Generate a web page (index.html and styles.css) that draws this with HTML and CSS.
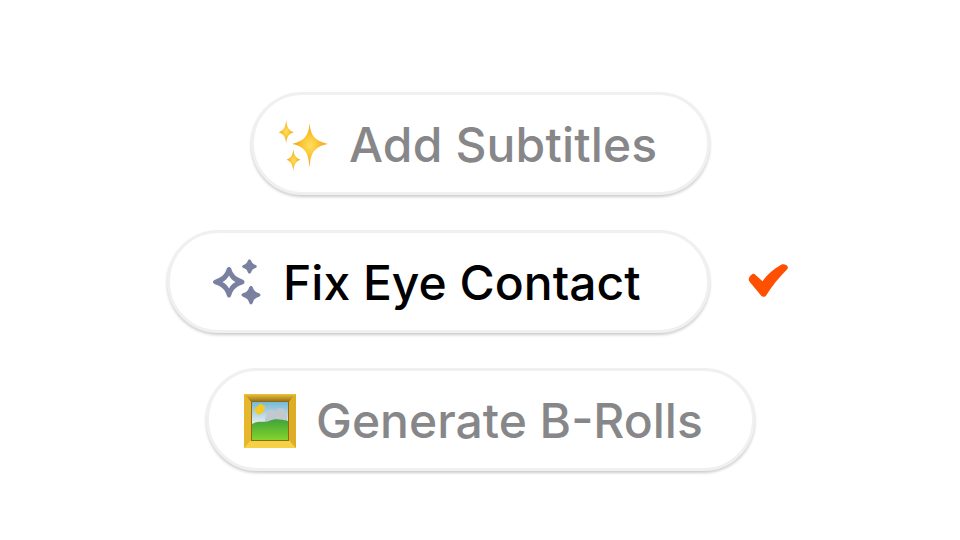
FILE: index.html
```html
<!DOCTYPE html>
<html lang="en">
<head>
<meta charset="utf-8">
<title>AI actions</title>
<link rel="stylesheet" href="styles.css">
</head>
<body>
<main class="list">
  <div class="row row-subtitles">
    <div class="pill pill-subtitles">
      <svg class="icon icon-sparkles" viewBox="0 0 52 50" aria-hidden="true">
        <defs>
          <radialGradient id="gold" cx="50%" cy="50%" r="50%">
            <stop offset="0" stop-color="#ffe05f"/>
            <stop offset=".5" stop-color="#fac22f"/>
            <stop offset="1" stop-color="#ee9c1b"/>
          </radialGradient>
        </defs>
        <path fill="url(#gold)" d="M32 3C33 14 35.500 20 50 23.500C35.500 26.500 33 33 32 47C31 33 28.500 26.500 15 23.500C28.500 20 31 14 32 3Z"/>
        <path fill="url(#gold)" d="M9 0C9.700 7 11 10 16.500 12C11 14 9.700 17 9 23C8.300 17 7 14 1.500 12C7 10 8.300 7 9 0Z"/>
        <path fill="url(#gold)" d="M16 29C16.600 34 18 37 23 39C18 41 16.600 44 16 50C15.400 44 14 41 9.500 39C14 37 15.400 34 16 29Z"/>
      </svg>
      <span class="label label-muted label-wide">Add Subtitles</span>
    </div>
  </div>

  <div class="row row-eye">
    <div class="pill pill-eye">
      <svg class="icon icon-stars" viewBox="0 0 50 50" aria-hidden="true">
        <path fill="#7a80a0" fill-rule="evenodd" d="M17 8C18 8 18.800 8.600 19.200 9.600C20.800 15 24 18.500 30.500 20.500C31.600 20.900 32.500 21.700 32.500 23C32.500 24.300 31.600 25.100 30.500 25.500C24 27.500 20.800 31 19.200 36.400C18.800 37.400 18 38.500 17 38.500C16 38.500 15.200 37.400 14.800 36.400C13.200 31 10 27.500 3.500 25.500C2.400 25.100 1 24.300 1 23C1 21.700 2.400 20.900 3.500 20.500C10 18.500 13.200 15 14.800 9.600C15.200 8.600 16 8 17 8ZM17 16.500C15.500 19.500 13.500 21.500 10.500 23C13.500 24.700 15.500 26.500 17 29.500C18.500 26.500 20.500 24.700 23.500 23C20.500 21.500 18.500 19.500 17 16.500Z"/>
        <path fill="#7a80a0" d="M37.500 .5C38.300 .5 38.900 1 39.200 1.800C39.900 4 41 5.100 43.500 6C44.200 6.300 44.800 6.800 44.800 7.500C44.800 8.200 44.200 8.700 43.500 9C41 9.900 39.900 11 39.200 13.200C38.900 14 38.300 14.500 37.500 14.500C36.700 14.500 36.100 14 35.800 13.200C35.100 11 34 9.900 31.500 9C30.800 8.700 30.200 8.200 30.200 7.500C30.200 6.800 30.800 6.300 31.500 6C34 5.100 35.100 4 35.800 1.800C36.100 1 36.700 .5 37.500 .5Z"/>
        <path fill="#7a80a0" d="M39 27C39.900 27 40.600 27.600 40.900 28.500C41.800 31.500 43.300 33 46.500 34.100C47.400 34.400 48.500 35 48.500 36C48.500 37 47.400 37.600 46.500 37.900C43.300 39 41.800 40.500 40.900 43.500C40.600 44.400 39.900 45.500 39 45.500C38.100 45.500 37.400 44.400 37.100 43.500C36.200 40.500 34.700 39 31.500 37.900C30.600 37.600 29.500 37 29.500 36C29.500 35 30.600 34.400 31.500 34.100C34.700 33 36.200 31.500 37.100 28.500C37.400 27.600 38.100 27 39 27Z"/>
      </svg>
      <span class="label">Fix Eye Contact</span>
    </div>
    <svg class="check" viewBox="0 0 40 33" aria-hidden="true">
      <path fill="#fe5000" d="M.8 14.500C1.500 12.500 3 10.800 4.800 9.800C5.500 9.500 6.200 9.700 6.800 10.200L14.500 17.300C19 11 25 5.500 33.500 .6C35 -.2 36.800 .2 38.500 1.200C40 2.200 40.300 4 39.200 5.300C31 13.500 24 22 18.300 31.200C17.200 32.900 15 33.300 13.400 32.100L1.400 17.500C.7 16.600 .5 15.500 .8 14.500Z"/>
    </svg>
  </div>

  <div class="row row-rolls">
    <div class="pill pill-rolls">
      <svg class="icon icon-frame" viewBox="0 0 52 54" aria-hidden="true">
        <defs>
          <linearGradient id="sky" x1="0" y1="0" x2="0" y2="1">
            <stop offset="0" stop-color="#74b9d6"/>
            <stop offset=".55" stop-color="#e4ecee"/>
          </linearGradient>
          <linearGradient id="grass" x1="0" y1="0" x2="0" y2="1">
            <stop offset="0" stop-color="#3fa33a"/>
            <stop offset="1" stop-color="#84d42c"/>
          </linearGradient>
          <linearGradient id="frameTop" x1="0" y1="0" x2="0" y2="1">
            <stop offset="0" stop-color="#f0c437"/>
            <stop offset="1" stop-color="#8f6a16"/>
          </linearGradient>
        </defs>
        <rect width="52" height="54" fill="#f2c93a"/>
        <path d="M0 0H52L45 8H7Z" fill="url(#frameTop)"/>
        <path d="M0 54H52L45 46H7Z" fill="#f6d045"/>
        <path d="M0 0L7 8V46L0 54Z" fill="#e6b62c"/>
        <path d="M52 0L45 8V46L52 54Z" fill="#dfac28"/>
        <rect x="7" y="7" width="38" height="40" fill="#8f6a16"/>
        <rect x="8" y="8" width="36" height="38" fill="url(#sky)"/>
        <path d="M21 25L24 17L28 15L31 18L35 14L40 15L43 21V28H21Z" fill="#c2c8d0"/>
        <path d="M10 16L16 9.500L21 12L20 18L14 21Z" fill="#f5c925"/>
        <path d="M8 30C15 26 19 29 25 27C31 24 37 25.500 44 27V46H8Z" fill="url(#grass)"/>
      </svg>
      <span class="label label-muted">Generate B-Rolls</span>
    </div>
  </div>
</main>
</body>
</html>
```
FILE: styles.css
```css
html, body {
  margin: 0;
  padding: 0;
  width: 960px;
  height: 540px;
  overflow: hidden;
  background: #ffffff;
}

.list {
  display: flex;
  flex-direction: column;
  gap: 35px;
  padding-top: 92px;
  font-family: Inter, "Liberation Sans", sans-serif;
}

.row {
  display: flex;
  align-items: center;
}

.row-subtitles { padding-left: 251px; }
.row-eye { padding-left: 167px; gap: 38px; }
.row-rolls { padding-left: 206px; }

.pill {
  box-sizing: border-box;
  height: 103px;
  display: flex;
  align-items: center;
  background: #ffffff;
  border: 3px solid #f0f0f0;
  border-radius: 52px;
  box-shadow: 0 2px 3px rgba(0, 0, 0, 0.2);
}

.pill-subtitles { width: 459px; padding-left: 23px; gap: 19px; }
.pill-eye { width: 543px; padding-left: 42px; gap: 21px; }
.pill-rolls { width: 549px; padding-left: 35px; gap: 20px; }

.label {
  font-size: 48px;
  font-weight: 500;
  line-height: 56px;
  padding-top: 2px;
  color: #000000;
  white-space: nowrap;
}

.label-muted { color: #87878a; }
.label-wide { letter-spacing: 0.15px; }

.icon { flex: none; display: block; }
.icon-sparkles { width: 53px; height: 51px; margin-top: 4px; }
.icon-stars { width: 50px; height: 50px; margin-top: 4px; }
.icon-frame { width: 52px; height: 54px; margin-top: 3px; }

.check { flex: none; display: block; width: 40px; height: 33px; margin-bottom: 2px; }
```
